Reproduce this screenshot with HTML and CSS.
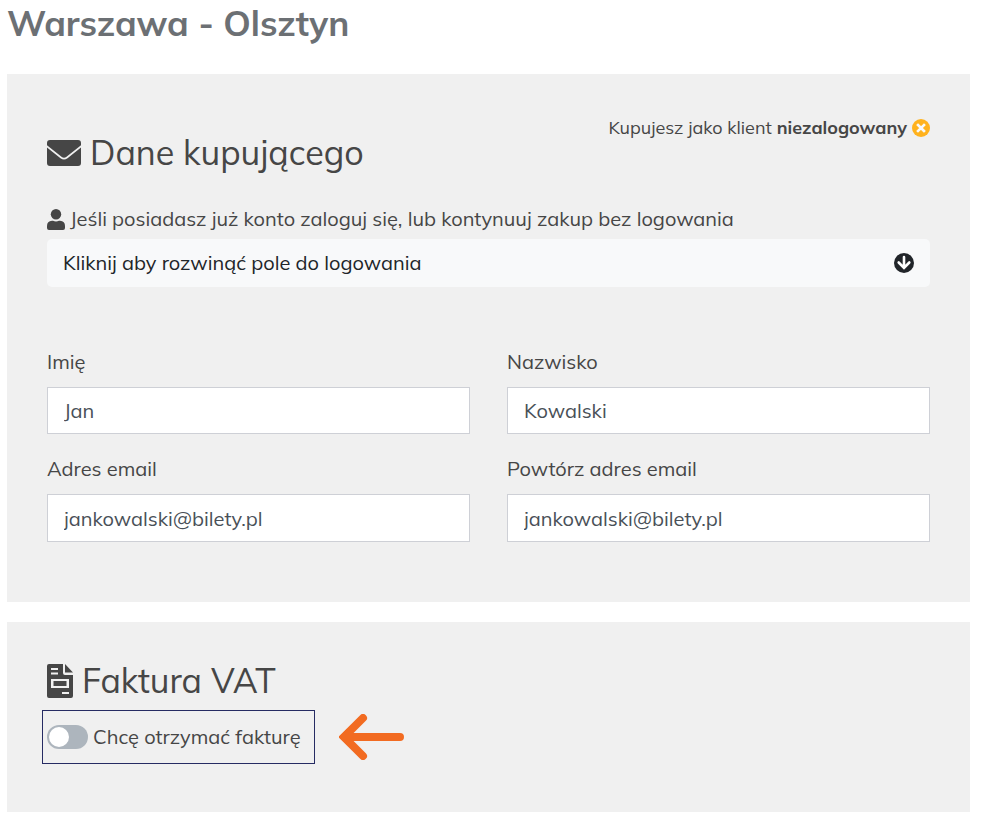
FILE: index.html
```html
<!DOCTYPE html>
<html lang="pl">
<head>
<meta charset="utf-8">
<meta name="viewport" content="width=device-width, initial-scale=1">
<title>Warszawa - Olsztyn</title>
<link rel="stylesheet" href="styles.css">
</head>
<body>
<main class="page">
  <h1 class="route">Warszawa - Olsztyn</h1>

  <section class="panel buyer">
    <header class="panel-header">
      <h2 class="panel-title">
        <svg class="icon-envelope" viewBox="0 0 34 26" aria-hidden="true"><path fill="currentColor" d="M3 0H31Q34 0 34 3V5.300L19.500 16.800Q17 18.800 14.500 16.800L0 5.300V3Q0 0 3 0ZM0 7.500L13.500 18.200Q17 20.900 20.500 18.200L34 7.500V23Q34 26 31 26H3Q0 26 0 23Z"/></svg>
        Dane kupującego
      </h2>
      <p class="status">Kupujesz jako klient <strong>niezalogowany</strong>
        <svg class="icon-status" viewBox="0 0 18 18" aria-hidden="true"><circle cx="9" cy="9" r="9" fill="#ffb21d"/><path d="M6 6L12 12M12 6L6 12" stroke="#f8f9fa" stroke-width="2.600" stroke-linecap="square"/></svg>
      </p>
    </header>

    <p class="login-hint">
      <svg class="icon-user" viewBox="0 0 18 21" aria-hidden="true"><circle cx="9" cy="5.200" r="5.200" fill="currentColor"/><path fill="currentColor" d="M5 11.700H6Q9 13.100 12 11.700H13Q18 11.900 18 17V19Q18 21 16 21H2Q0 21 0 19V17Q0 11.900 5 11.700Z"/></svg>
      Jeśli posiadasz już konto zaloguj się, lub kontynuuj zakup bez logowania
    </p>
    <button class="login-toggle" type="button">
      <span>Kliknij aby rozwinąć pole do logowania</span>
      <svg class="icon-down" viewBox="0 0 20 20" aria-hidden="true"><circle cx="10" cy="10" r="10" fill="currentColor"/><path d="M10 4V14.500M4.700 9.500L10 14.800L15.300 9.500" fill="none" stroke="#fff" stroke-width="2.600" stroke-linecap="round"/></svg>
    </button>

    <form class="fields">
      <div class="field">
        <label for="first-name">Imię</label>
        <input id="first-name" type="text" value="Jan">
      </div>
      <div class="field">
        <label for="last-name">Nazwisko</label>
        <input id="last-name" type="text" value="Kowalski">
      </div>
      <div class="field">
        <label for="email">Adres email</label>
        <input id="email" type="email" value="jankowalski@bilety.pl">
      </div>
      <div class="field">
        <label for="email-repeat">Powtórz adres email</label>
        <input id="email-repeat" type="email" value="jankowalski@bilety.pl">
      </div>
    </form>
  </section>

  <section class="panel invoice">
    <h2 class="panel-title">
      <svg class="icon-invoice" viewBox="0 0 26 34" aria-hidden="true"><path fill="currentColor" fill-rule="evenodd" d="M2 0H16V9Q16 11 18 11H26V32Q26 34 24 34H2Q0 34 0 32V2Q0 0 2 0ZM4 4V6H11V4ZM4 8.500V10.500H11V8.500ZM4 15V24H22V15ZM6.500 17H19.500V22H6.500ZM15 28V30H22V28Z"/><path fill="currentColor" d="M18 0L26 8.500H18Z"/></svg>
      Faktura VAT
    </h2>
    <div class="invoice-row">
      <label class="invoice-option" for="invoice">
        <input class="switch" id="invoice" type="checkbox">
        Chcę otrzymać fakturę
      </label>
      <svg class="icon-arrow" viewBox="0 0 66 46" aria-hidden="true"><path d="M24 4L5 23L24 42M8 23H61" fill="none" stroke="#f26b21" stroke-width="8" stroke-linecap="round"/><path d="M0 23L8 15V31Z" fill="#f26b21"/></svg>
    </div>
  </section>
</main>
</body>
</html>
```
FILE: styles.css
```css
* {
  box-sizing: border-box;
}

body {
  margin: 0;
  background: #fff;
  color: #464646;
  font-family: Muli, Mulish, Lato, "Open Sans", sans-serif;
  font-size: 20px;
  line-height: 24px;
}

h1, h2, p {
  margin: 0;
}

.page {
  padding: 0 14px 14px 7px;
}

.route {
  padding-top: 1px;
  margin-bottom: 29px;
  color: #6c7074;
  font-size: 35px;
  line-height: 44px;
  font-weight: 700;
}

.panel {
  padding: 40px;
  background: #f0f0f0;
}

.buyer {
  padding-bottom: 60px;
}

.panel-header {
  display: flex;
  justify-content: space-between;
  align-items: flex-start;
  margin-bottom: 34px;
}

.panel-title {
  display: flex;
  align-items: center;
  gap: 9px;
  font-size: 34px;
  line-height: 40px;
  font-weight: 400;
}

.panel-header .panel-title {
  margin-top: 19px;
}

.status {
  display: flex;
  align-items: center;
  gap: 5px;
  margin-top: 2px;
  font-size: 18px;
}

.icon-envelope {
  width: 34px;
  height: 26px;
}

.icon-status {
  width: 18px;
  height: 18px;
}

.login-hint {
  display: flex;
  align-items: center;
  gap: 5px;
  margin-bottom: 8px;
}

.icon-user {
  flex: none;
  width: 18px;
  height: 21px;
}

.login-toggle {
  display: flex;
  align-items: center;
  justify-content: space-between;
  width: 100%;
  padding: 12px 16px;
  border: 0;
  border-radius: 5px;
  background: #f8f9fa;
  color: #212529;
  font: inherit;
  text-align: left;
}

.icon-down {
  width: 20px;
  height: 20px;
}

.fields {
  display: grid;
  grid-template-columns: 1fr 1fr;
  gap: 23px 37px;
  margin-top: 63px;
}

.field {
  display: flex;
  flex-direction: column;
  gap: 13px;
}

.field input {
  width: 100%;
  height: 47px;
  padding: 0 16px;
  border: 1px solid #ced0d6;
  border-radius: 0;
  background: #fff;
  color: #495057;
  font: inherit;
}

.field input[type="email"] {
  height: 48px;
}

.invoice {
  margin-top: 20px;
  padding-top: 39px;
  padding-bottom: 48px;
}

.icon-invoice {
  width: 26px;
  height: 34px;
}

.invoice-row {
  display: flex;
  align-items: center;
  gap: 24px;
  margin: 9px 0 0 -5px;
}

.invoice-option {
  display: flex;
  align-items: center;
  gap: 5px;
  padding: 14px 13px 14px 4px;
  border: 1px solid #262b63;
}

.switch {
  appearance: none;
  display: flex;
  width: 41px;
  height: 24px;
  margin: 0;
  padding: 2px;
  border-radius: 12px;
  background: #adb5bd;
}

.switch::before {
  content: "";
  width: 20px;
  height: 20px;
  border-radius: 50%;
  background: #fff;
}

.switch:checked {
  justify-content: flex-end;
}

.icon-arrow {
  width: 66px;
  height: 46px;
}
```
